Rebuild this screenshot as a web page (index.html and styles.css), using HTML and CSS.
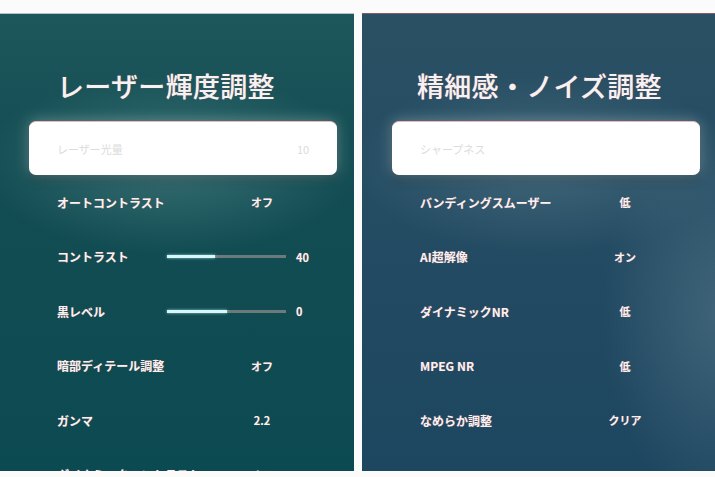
FILE: index.html
```html
<!DOCTYPE html>
<html lang="ja">
<head>
    <meta charset="UTF-8">
    <meta name="viewport" content="width=device-width, initial-scale=1.0">
    <title>画質設定</title>
    <link rel="stylesheet" href="styles.css">
</head>
<body>
    <div class="screens">

        <!-- Laser brightness menu -->
        <div class="panel panel-teal">
            <h1 class="panel-title">レーザー輝度調整</h1>
            <div class="menu">
                <div class="row row-focus">
                    <span class="label">レーザー光量</span>
                    <span class="num">10</span>
                </div>
                <div class="row">
                    <span class="label">オートコントラスト</span>
                    <span class="value">オフ</span>
                </div>
                <div class="row row-slider">
                    <span class="label">コントラスト</span>
                    <div class="bar"><div class="bar-fill" style="width: 40%;"></div></div>
                    <span class="num">40</span>
                </div>
                <div class="row row-slider">
                    <span class="label">黒レベル</span>
                    <div class="bar"><div class="bar-fill" style="width: 50%;"></div></div>
                    <span class="num">0</span>
                </div>
                <div class="row">
                    <span class="label">暗部ディテール調整</span>
                    <span class="value">オフ</span>
                </div>
                <div class="row">
                    <span class="label">ガンマ</span>
                    <span class="value">2.2</span>
                </div>
                <div class="row">
                    <span class="label">ダイナミックコントラスト</span>
                    <span class="value">オフ</span>
                </div>
            </div>
        </div>

        <!-- Sharpness / noise menu -->
        <div class="panel panel-blue">
            <h1 class="panel-title">精細感・ノイズ調整</h1>
            <div class="menu">
                <div class="row row-focus">
                    <span class="label">シャープネス</span>
                    <span class="num"></span>
                </div>
                <div class="row">
                    <span class="label">バンディングスムーザー</span>
                    <span class="value">低</span>
                </div>
                <div class="row">
                    <span class="label">AI超解像</span>
                    <span class="value">オン</span>
                </div>
                <div class="row">
                    <span class="label">ダイナミックNR</span>
                    <span class="value">低</span>
                </div>
                <div class="row">
                    <span class="label">MPEG NR</span>
                    <span class="value">低</span>
                </div>
                <div class="row">
                    <span class="label">なめらか調整</span>
                    <span class="value">クリア</span>
                </div>
            </div>
        </div>

    </div>
</body>
</html>
```

FILE: styles.css
```css
body {
    margin: 0;
    background-color: #fbfbfb;
    font-family: "Noto Sans CJK JP", "Noto Sans", sans-serif;
    color: #f8f1f1;
}
.screens {
    display: flex;
    gap: 8px;
    padding-top: 13px;
    height: 458px;
}
.panel {
    height: 458px;
    overflow: hidden;
    box-sizing: border-box;
}
.panel-teal {
    width: 354px;
    padding-left: 29px;
    background:
        radial-gradient(ellipse 190px 90px at 170px 150px, rgba(120, 170, 170, 0.35), rgba(120, 170, 170, 0) 100%),
        linear-gradient(180deg, #1d575c 0%, #134d53 35%, #0c4a51 100%);
    border-top: 1px solid #b9c3c4;
}
.panel-blue {
    flex: 1;
    padding-left: 30px;
    background:
        radial-gradient(ellipse 120px 200px at 360px 300px, rgba(120, 150, 165, 0.35), rgba(120, 150, 165, 0) 100%),
        radial-gradient(ellipse 190px 90px at 180px 150px, rgba(130, 160, 170, 0.3), rgba(130, 160, 170, 0) 100%),
        linear-gradient(180deg, #2a5063 0%, #244c63 40%, #1d4660 100%);
    border-top: 1px solid #8a5a60;
}
.panel-title {
    margin: 0;
    padding: 52px 0 0 28px;
    height: 55px;
    font-size: 27px;
    font-weight: 500;
    line-height: 40px;
    letter-spacing: 0.3px;
    text-shadow: 0 0 1px rgba(255, 140, 140, 0.6);
}
.panel-blue .panel-title {
    padding-left: 25px;
}
.menu {
    width: 308px;
}
.row {
    display: grid;
    grid-template-columns: 185px 40px;
    align-items: center;
    height: 54.5px;
    padding-left: 28px;
    font-size: 12px;
    font-weight: 700;
    text-shadow: 0 0 1px rgba(255, 120, 120, 0.55);
}
.row-focus {
    height: 54px;
    grid-template-columns: 1fr 40px;
    background-color: #ffffff;
    border-radius: 7px;
    border-top: 1px solid #f0b6b6;
    box-sizing: border-box;
    box-shadow: 0 0 14px rgba(235, 245, 245, 0.35), 0 6px 10px rgba(0, 20, 25, 0.35);
    color: #dcdcdc;
    font-weight: 400;
    font-size: 11px;
    text-shadow: none;
}
.value {
    text-align: center;
    font-size: 11px;
}
.num {
    font-size: 11px;
}
.row-slider {
    grid-template-columns: 110px 119px 1fr;
}
.row-slider .num {
    padding-left: 10px;
}
.bar {
    height: 3px;
    background-color: #6c7a7c;
}
.bar-fill {
    height: 100%;
    background-color: #d9f6f8;
    box-shadow: 0 0 3px rgba(170, 240, 250, 0.8);
}
```
